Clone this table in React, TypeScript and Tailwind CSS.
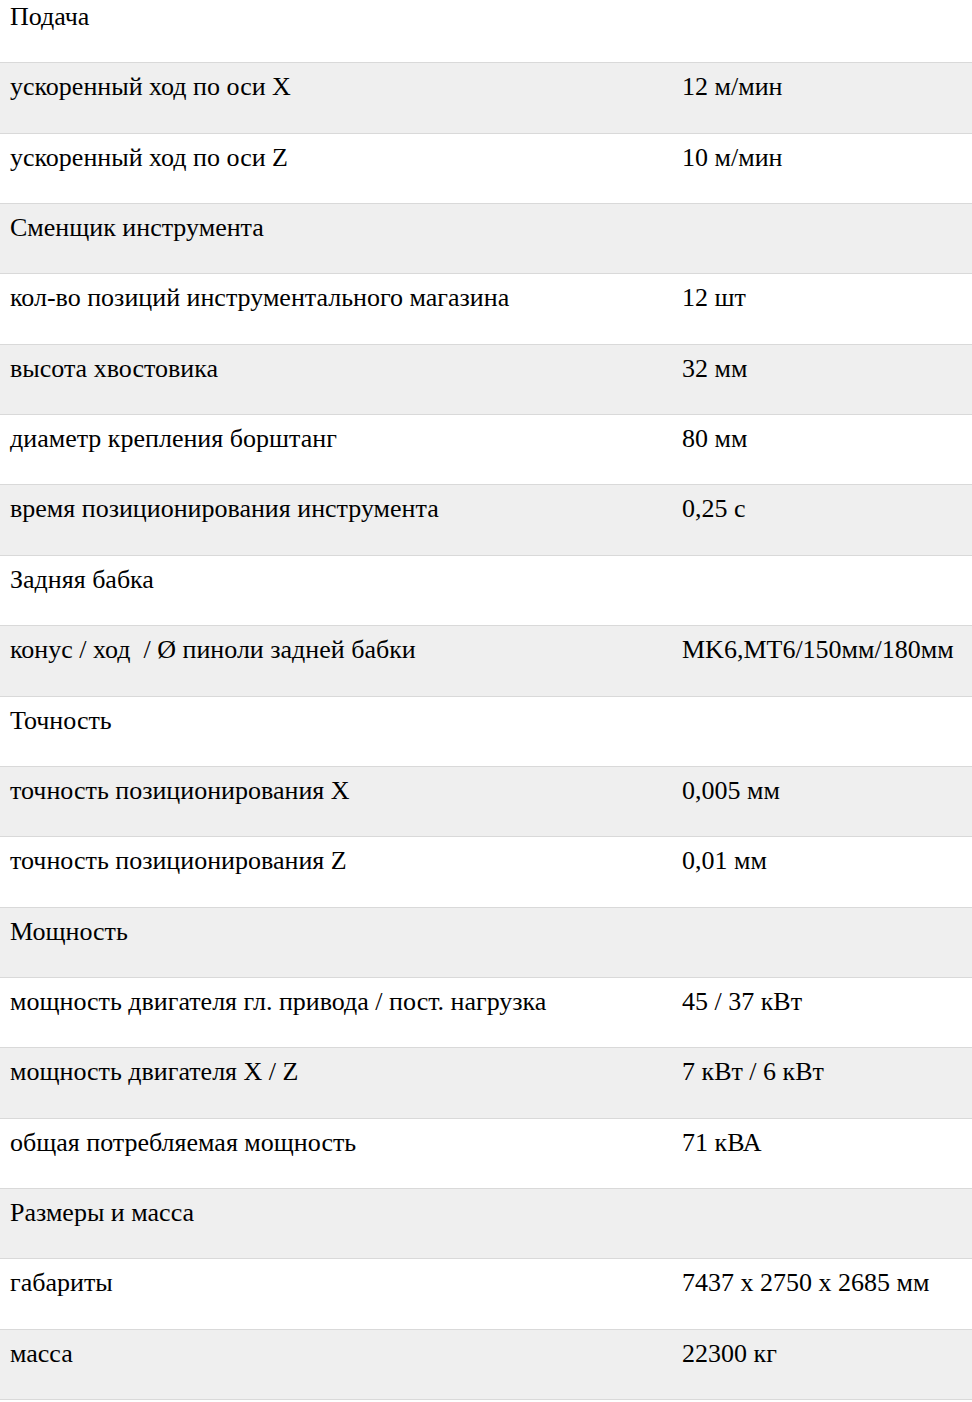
const rows: [string, string][] = [
  ['Подача', ''],
  ['ускоренный ход по оси X', '12 м/мин'],
  ['ускоренный ход по оси Z', '10 м/мин'],
  ['Сменщик инструмента', ''],
  ['кол-во позиций инструментального магазина', '12 шт'],
  ['высота хвостовика', '32 мм'],
  ['диаметр крепления борштанг', '80 мм'],
  ['время позиционирования инструмента', '0,25 с'],
  ['Задняя бабка', ''],
  ['конус / ход  / Ø пиноли задней бабки', 'MK6,MT6/150мм/180мм'],
  ['Точность', ''],
  ['точность позиционирования X', '0,005 мм'],
  ['точность позиционирования Z', '0,01 мм'],
  ['Мощность', ''],
  ['мощность двигателя гл. привода / пост. нагрузка', '45 / 37 кВт'],
  ['мощность двигателя X / Z', '7 кВт / 6 кВт'],
  ['общая потребляемая мощность', '71 кВА'],
  ['Размеры и масса', ''],
  ['габариты', '7437 x 2750 x 2685 мм'],
  ['масса', '22300 кг'],
];

export default function App() {
  return (
    <div className="w-[972px] overflow-hidden bg-white text-black font-['Liberation_Serif','Times_New_Roman',serif] text-[26px] leading-[36px]">
      <div className="-mt-[7.1px] flex flex-col">
        {rows.map(([label, value], i) => (
          <div
            key={i}
            className={`flex h-[70.37px] border-b border-[#d9d9d9] pt-[6px] ${i % 2 === 1 ? 'bg-[#efefef]' : 'bg-white'}`}
          >
            <div className="w-[672px] shrink-0 pl-[10px] whitespace-pre">{label}</div>
            <div className="pl-[10px] whitespace-nowrap">{value}</div>
          </div>
        ))}
      </div>
    </div>
  );
}
